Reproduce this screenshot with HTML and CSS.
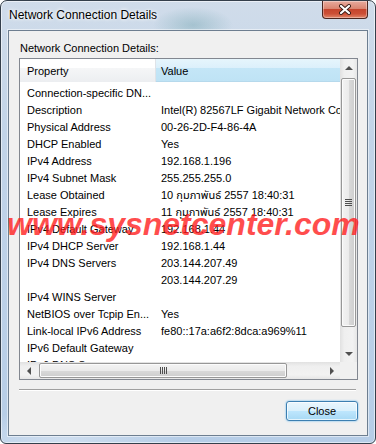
FILE: index.html
```html
<!DOCTYPE html>
<html lang="en">
<head>
    <meta charset="UTF-8">
    <title>Network Connection Details</title>
    <link rel="stylesheet" href="styles.css">
</head>
<body>
    <div class="window">
        <!-- Title bar -->
        <div class="titlebar">
            <span class="title">Network Connection Details</span>
            <button class="close-x">
                <svg width="14" height="11" viewBox="0 0 14 11">
                    <path d="M3 2 L11 9 M11 2 L3 9" stroke="#3a1d18" stroke-width="4" stroke-linecap="round"/>
                    <path d="M3 2 L11 9 M11 2 L3 9" stroke="#ffffff" stroke-width="2.2" stroke-linecap="round"/>
                </svg>
            </button>
        </div>

        <div class="client">
            <div class="label">Network Connection Details:</div>

            <div class="listview">
                <div class="list-main">
                    <div class="list-header">
                        <div class="hdr hdr-prop">Property</div>
                        <div class="hdr hdr-val">Value</div>
                    </div>
                    <div class="list-body">
                        <div class="row"><span class="col-prop">Connection-specific DN...</span><span class="col-val"></span></div>
                        <div class="row"><span class="col-prop">Description</span><span class="col-val">Intel(R) 82567LF Gigabit Network Connection</span></div>
                        <div class="row"><span class="col-prop">Physical Address</span><span class="col-val">00-26-2D-F4-86-4A</span></div>
                        <div class="row"><span class="col-prop">DHCP Enabled</span><span class="col-val">Yes</span></div>
                        <div class="row"><span class="col-prop">IPv4 Address</span><span class="col-val">192.168.1.196</span></div>
                        <div class="row"><span class="col-prop">IPv4 Subnet Mask</span><span class="col-val">255.255.255.0</span></div>
                        <div class="row"><span class="col-prop">Lease Obtained</span><span class="col-val">10 กุมภาพันธ์ 2557 18:40:31</span></div>
                        <div class="row"><span class="col-prop">Lease Expires</span><span class="col-val">11 กุมภาพันธ์ 2557 18:40:31</span></div>
                        <div class="row"><span class="col-prop">IPv4 Default Gateway</span><span class="col-val">192.168.1.44</span></div>
                        <div class="row"><span class="col-prop">IPv4 DHCP Server</span><span class="col-val">192.168.1.44</span></div>
                        <div class="row"><span class="col-prop">IPv4 DNS Servers</span><span class="col-val">203.144.207.49</span></div>
                        <div class="row"><span class="col-prop"></span><span class="col-val">203.144.207.29</span></div>
                        <div class="row"><span class="col-prop">IPv4 WINS Server</span><span class="col-val"></span></div>
                        <div class="row"><span class="col-prop">NetBIOS over Tcpip En...</span><span class="col-val">Yes</span></div>
                        <div class="row"><span class="col-prop">Link-local IPv6 Address</span><span class="col-val">fe80::17a:a6f2:8dca:a969%11</span></div>
                        <div class="row"><span class="col-prop">IPv6 Default Gateway</span><span class="col-val"></span></div>
                        <div class="row"><span class="col-prop">IPv6 DNS Server</span><span class="col-val"></span></div>
                    </div>
                </div>

                <!-- Vertical scrollbar -->
                <div class="vscroll">
                    <div class="arrow arrow-up"></div>
                    <div class="vtrack">
                        <div class="thumb-v"><span class="grip-v"></span></div>
                    </div>
                    <div class="arrow arrow-down"></div>
                </div>

                <!-- Horizontal scrollbar -->
                <div class="hscroll">
                    <div class="arrow arrow-left"></div>
                    <div class="htrack">
                        <div class="thumb-h"><span class="grip-h"></span></div>
                    </div>
                    <div class="arrow arrow-right"></div>
                </div>
                <div class="corner"></div>
            </div>

            <div class="separator"></div>

            <div class="buttons">
                <button class="btn-close">Close</button>
            </div>
        </div>

        <div class="watermark">www.sysnetcenter.com</div>
    </div>
</body>
</html>
```

FILE: styles.css
```css
* {
    box-sizing: border-box;
}

body {
    margin: 0;
    background: #ffffff;
    font-family: "Liberation Sans", "Noto Sans Thai", Arial, sans-serif;
    font-size: 11px;
    color: #000;
}

/* Window frame */
.window {
    position: relative;
    width: 376px;
    height: 444px;
    border: 1px solid #343f4b;
    border-radius: 7px 7px 6px 6px;
    background:
        radial-gradient(ellipse 40px 18px at 192px 24px, rgba(90, 150, 160, 0.35), transparent),
        radial-gradient(ellipse 120px 30px at 60px 440px, rgba(255, 255, 255, 0.35), transparent),
        linear-gradient(180deg, #d0dcea 0%, #c2d4e8 30%, #b6cde7 100%);
    box-shadow: inset 0 0 0 1px rgba(255, 255, 255, 0.55);
    padding: 0 7px 7px;
    display: flex;
    flex-direction: column;
    overflow: hidden;
}

.titlebar {
    height: 29px;
    display: flex;
    justify-content: space-between;
    align-items: flex-start;
}

.title {
    font-size: 12px;
    line-height: 14px;
    margin-top: 7px;
    padding-left: 1px;
    text-shadow: 0 0 5px #fff, 0 0 3px #fff;
}

.close-x {
    width: 46px;
    height: 18px;
    padding: 0;
    border: 1px solid #4b2620;
    border-top: none;
    border-radius: 0 0 4px 4px;
    background: linear-gradient(180deg, #e8ab9e 0%, #da8571 45%, #c6452e 50%, #cc4f36 75%, #e2866a 100%);
    box-shadow: inset 0 0 0 1px rgba(255, 255, 255, 0.35);
    display: flex;
    align-items: center;
    justify-content: center;
}

/* Client area */
.client {
    flex: 1;
    border: 1px solid #6d7e90;
    background: #f0f0f0;
    box-shadow: 0 0 0 1px rgba(255, 255, 255, 0.5);
    padding: 10px 9px 0 10px;
    display: flex;
    flex-direction: column;
}

.label {
    line-height: 14px;
    padding-left: 1px;
}

/* List view */
.listview {
    margin-top: 3px;
    height: 322px;
    border: 1px solid #828790;
    background: #fff;
    display: grid;
    grid-template-columns: 1fr 17px;
    grid-template-rows: 1fr 17px;
}

.list-main {
    overflow: hidden;
}

.list-header {
    display: flex;
    height: 23px;
}

.hdr {
    padding-top: 2px;
    line-height: 21px;
    white-space: nowrap;
}

.hdr-prop {
    width: 136px;
    padding-left: 7px;
    border-right: 1px solid #dfe3e8;
    background: linear-gradient(180deg, #ffffff 0%, #ffffff 40%, #f5f6f7 41%, #eceef1 100%);
}

.hdr-val {
    flex: 1;
    padding-left: 5px;
    background: linear-gradient(180deg, #e6f5fc 0%, #dcf0fb 40%, #c4e6f7 41%, #bfe3f5 100%);
    border-bottom: 1px solid #b6d9ec;
}

.list-body {
    padding-top: 3px;
}

.row {
    display: flex;
    height: 17px;
    line-height: 17px;
    white-space: nowrap;
}

.col-prop {
    width: 135px;
    flex-shrink: 0;
    padding-left: 7px;
    overflow: hidden;
}

.col-val {
    padding-left: 6px;
}

/* Scrollbars */
.vscroll {
    display: flex;
    flex-direction: column;
    background: linear-gradient(90deg, #e1e1e1 0%, #efefef 25%, #f2f2f2 75%, #e6e6e6 100%);
}

.vtrack {
    flex: 1;
}

.arrow {
    flex: 0 0 17px;
    height: 17px;
    display: flex;
    align-items: center;
    justify-content: center;
}

.arrow::before {
    content: '';
    width: 0;
    height: 0;
}

.arrow-up::before {
    border-left: 4px solid transparent;
    border-right: 4px solid transparent;
    border-bottom: 4px solid #505050;
}

.arrow-down::before {
    border-left: 4px solid transparent;
    border-right: 4px solid transparent;
    border-top: 4px solid #505050;
}

.arrow-left::before {
    border-top: 4px solid transparent;
    border-bottom: 4px solid transparent;
    border-right: 4px solid #505050;
}

.arrow-right::before {
    border-top: 4px solid transparent;
    border-bottom: 4px solid transparent;
    border-left: 4px solid #505050;
}

.thumb-v {
    margin: 2px 1px 0;
    height: 249px;
    border: 1px solid #979797;
    border-radius: 2px;
    background: linear-gradient(90deg, #f3f3f3 0%, #ebebeb 50%, #dadada 51%, #cdcdcd 100%);
    box-shadow: inset 0 0 0 1px #fbfbfb;
    display: flex;
    align-items: center;
    justify-content: center;
}

.grip-v {
    width: 7px;
    height: 7px;
    background: repeating-linear-gradient(180deg, #4e4e4e 0 1px, transparent 1px 2px);
}

.hscroll {
    display: flex;
    background: linear-gradient(180deg, #e1e1e1 0%, #efefef 25%, #f2f2f2 75%, #e6e6e6 100%);
}

.htrack {
    flex: 1;
}

.thumb-h {
    margin: 1px 0 0 2px;
    width: 248px;
    height: 15px;
    border: 1px solid #979797;
    border-radius: 2px;
    background: linear-gradient(180deg, #f3f3f3 0%, #ebebeb 50%, #dadada 51%, #cdcdcd 100%);
    box-shadow: inset 0 0 0 1px #fbfbfb;
    display: flex;
    align-items: center;
    justify-content: center;
}

.grip-h {
    width: 7px;
    height: 7px;
    background: repeating-linear-gradient(90deg, #4e4e4e 0 1px, transparent 1px 2px);
}

.corner {
    background: #f0f0f0;
}

.separator {
    margin: 9px 2px 0 0;
    height: 2px;
    border-top: 1px solid #a0a0a0;
    border-bottom: 1px solid #ffffff;
}

.buttons {
    display: flex;
    justify-content: flex-end;
    margin-top: 10px;
}

.btn-close {
    width: 72px;
    height: 20px;
    padding: 0;
    border: 1px solid #3c7fb1;
    border-radius: 3px;
    background: linear-gradient(180deg, #eaf6fd 0%, #d9f0fc 50%, #bee6fd 51%, #a7d9f5 100%);
    box-shadow: inset 0 0 0 1px rgba(255, 255, 255, 0.7), 0 0 2px #4fb0f0;
    font-family: "Liberation Sans", Arial, sans-serif;
    font-size: 11px;
    color: #000;
}

/* Watermark over the dialog */
.watermark {
    position: absolute;
    left: 6px;
    top: 207px;
    font: italic bold 32px/32px "Liberation Sans", Arial, sans-serif;
    color: rgba(255, 28, 28, 0.78);
    white-space: nowrap;
    pointer-events: none;
}
```
